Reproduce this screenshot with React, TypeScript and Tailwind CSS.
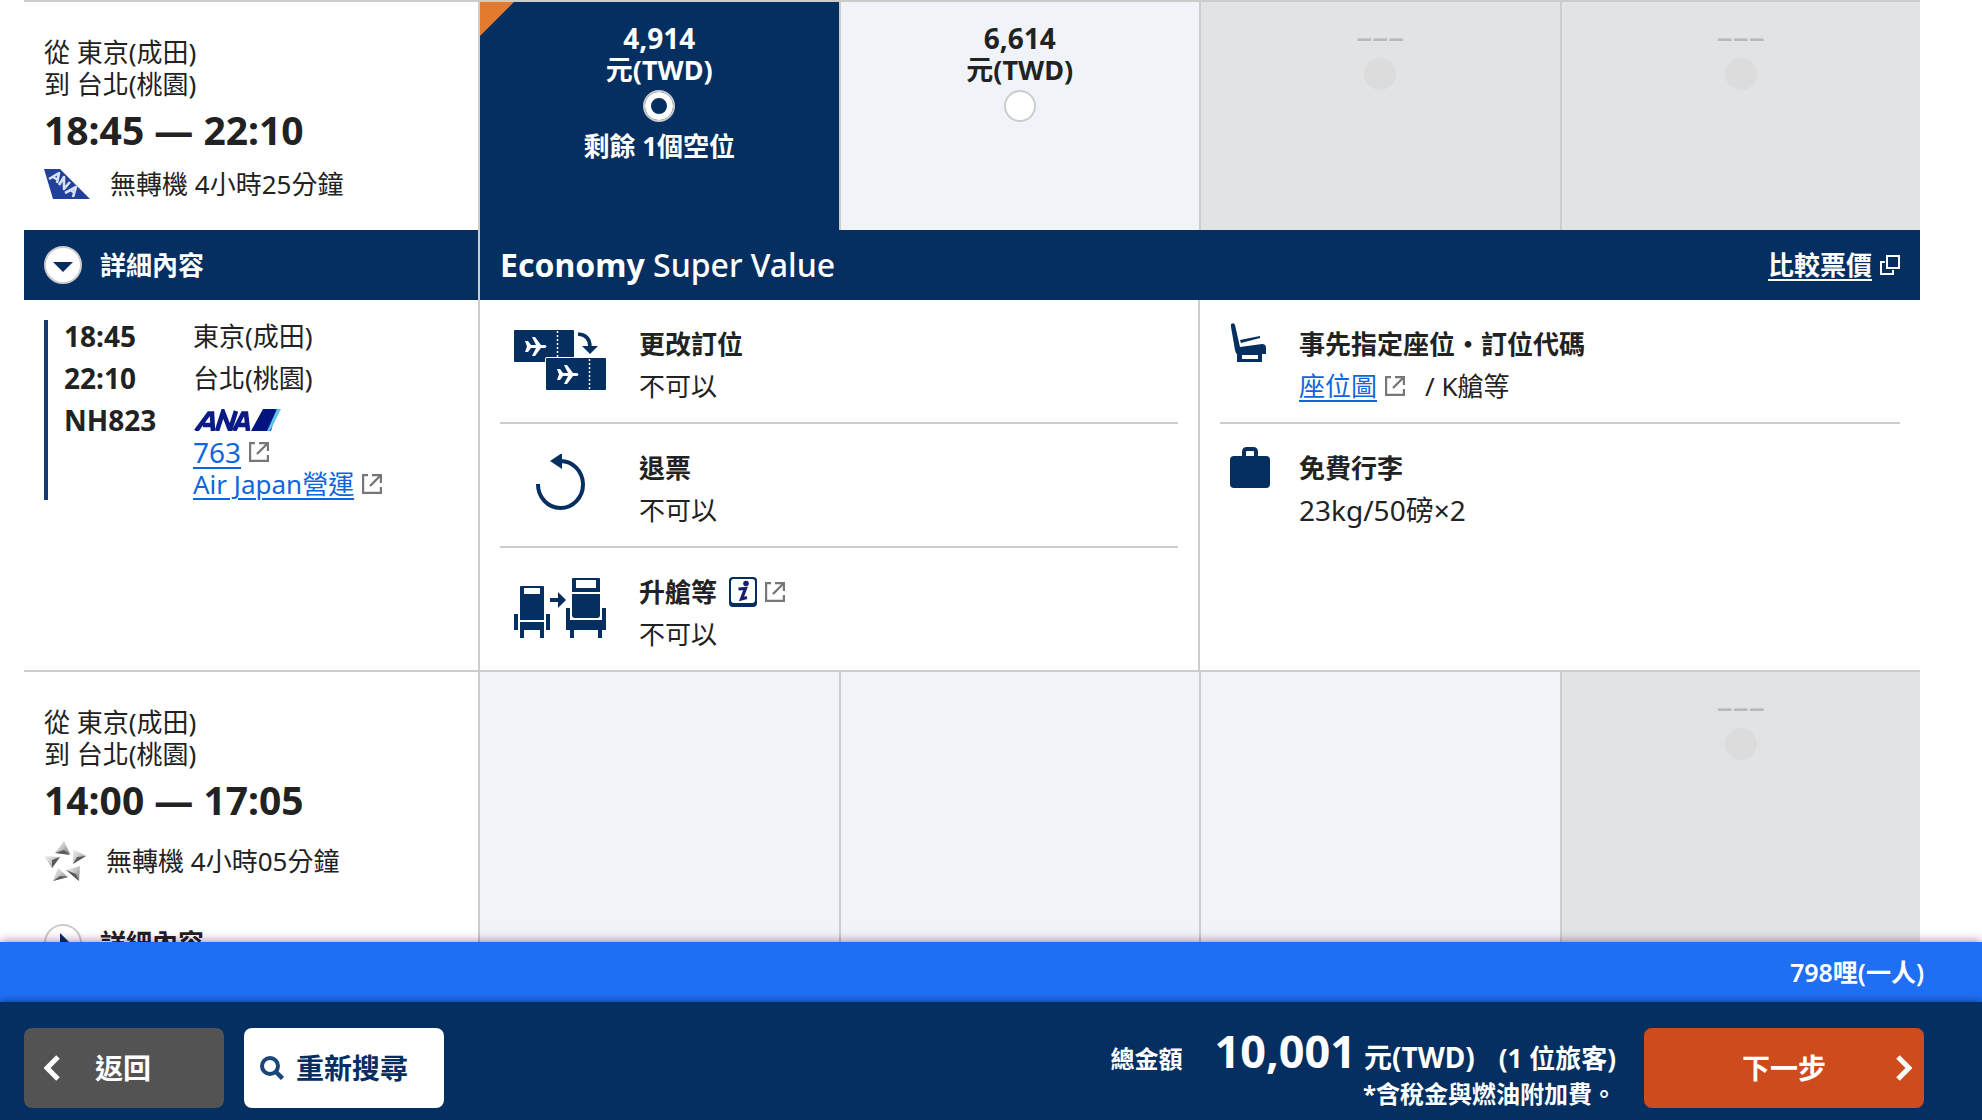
import React from 'react';

interface Fare {
  id: string;
  price?: string;
  note?: string;
  status: 'selected' | 'available' | 'empty' | 'disabled';
}

interface Flight {
  id: string;
  from: string;
  to: string;
  time: string;
  duration: string;
  fares: Fare[];
}

const FLIGHTS: Flight[] = [
  {
    id: 'nh823',
    from: '東京(成田)',
    to: '台北(桃園)',
    time: '18:45 — 22:10',
    duration: '無轉機 4小時25分鐘',
    fares: [
      { id: 'f1', price: '4,914', note: '剩餘 1個空位', status: 'selected' },
      { id: 'f2', price: '6,614', status: 'available' },
      { id: 'f3', status: 'disabled' },
      { id: 'f4', status: 'disabled' },
    ],
  },
  {
    id: 'partner',
    from: '東京(成田)',
    to: '台北(桃園)',
    time: '14:00 — 17:05',
    duration: '無轉機 4小時05分鐘',
    fares: [
      { id: 'f5', status: 'empty' },
      { id: 'f6', status: 'empty' },
      { id: 'f7', status: 'empty' },
      { id: 'f8', status: 'disabled' },
    ],
  },
];

const TailIcon = () => (
  <svg width="46" height="30" viewBox="0 0 46 30" aria-hidden="true">
    <path d="M0 0H16L46 30H9Z" fill="#21409a" />
    <g fill="none" stroke="#d8e0f5" strokeWidth="2.6" strokeLinejoin="round">
      <path d="M5 10L15 4L13 14M9 8L14 11" />
      <path d="M15 16L20 8L20 20L26 13" />
      <path d="M21 24L32 18L29 28M26 21L31 24" />
    </g>
  </svg>
);

const StarIcon = () => (
  <svg width="42" height="40" viewBox="0 0 42 40" aria-hidden="true">
    <defs>
      <linearGradient id="metal" x1="0" y1="0" x2="1" y2="1">
        <stop offset="0" stopColor="#f4f4f4" />
        <stop offset="0.5" stopColor="#c4c4c4" />
        <stop offset="1" stopColor="#777777" />
      </linearGradient>
    </defs>
    <g fill="url(#metal)">
      <path d="M20 0L26 13L11 12Z" />
      <path d="M29 8L42 15L29 23Z" />
      <path d="M36 25L35 40L22 29Z" />
      <path d="M14 27L24 36L9 40Z" />
      <path d="M0 15L16 16L8 27Z" />
    </g>
    <g fill="#5a5a5a">
      <path d="M11 12L20 9L26 14Z" />
      <path d="M42 15L33 16L29 23Z" />
      <path d="M35 40L32 33L22 29Z" />
      <path d="M9 40L16 35L24 36Z" />
      <path d="M8 27L8 19L16 16Z" />
    </g>
  </svg>
);

const AnaLogo = () => (
  <svg width="88" height="22" viewBox="0 0 88 22" role="img" aria-label="ANA">
    <g fill="none" stroke="#0b1a86" strokeWidth="4.6">
      <path d="M3 22L16 4.500H19L20 22M10 16H20" />
      <path d="M24 22L30 3L37 21L43 2" />
      <path d="M41 22L50 4.500H53L55 22M46 16H55" />
    </g>
    <path d="M58 22L70 0H83L77 22Z" fill="#03137f" />
    <path d="M70 22L83 0H84L78 22Z" fill="#03137f" />
    <path d="M74 22L84 0H88L77 22Z" fill="#5cc3ee" />
  </svg>
);

const ExternalIcon = () => (
  <svg width="20" height="20" viewBox="0 0 20 20" fill="none" stroke="#777777" strokeWidth="2.4" aria-hidden="true">
    <path d="M6 1H1V19H19V13" />
    <path d="M8 12L18 2M10 1H19V9" />
  </svg>
);

const WindowIcon = () => (
  <svg width="20" height="20" viewBox="0 0 20 20" fill="none" stroke="#ffffff" strokeWidth="2" aria-hidden="true">
    <path d="M7 1H19V13H7Z" />
    <path d="M5 7H1V19H13V15" />
  </svg>
);

const InfoIcon = () => (
  <svg width="28" height="30" viewBox="0 0 28 30" aria-hidden="true">
    <rect x="0" y="0" width="28" height="30" rx="4" fill="#052f60" />
    <rect x="2" y="2" width="24" height="24" rx="3" fill="#ffffff" />
    <circle cx="17" cy="6.500" r="2.800" fill="#1c1c6c" />
    <path d="M9.500 12L16.500 11.500L12.500 22L18 20.500" fill="none" stroke="#1c1c6c" strokeWidth="3.2" />
  </svg>
);

const PLANE = 'M0 4L3 4L6 8H11L7 0H10L16 8H20Q23 9.500 20 11H16L10 19H7L11 11H6L3 15H0L2 9.500Z';

const ChangeIcon = () => (
  <svg width="92" height="60" viewBox="0 0 92 60" aria-hidden="true">
    <rect x="0" y="0" width="60" height="32" rx="1" fill="#052f60" />
    <rect x="31" y="27" width="61" height="33" rx="2" fill="#ffffff" />
    <rect x="32" y="28" width="60" height="32" rx="1" fill="#052f60" />
    <path d="M43.500 1V27M75.500 29V60" stroke="#ffffff" strokeWidth="1.500" strokeDasharray="2 2" />
    <path d={PLANE} transform="translate(11 7)" fill="#ffffff" />
    <path d={PLANE} transform="translate(43 35)" fill="#ffffff" />
    <path d="M64 4Q76 5 76 17" fill="none" stroke="#052f60" strokeWidth="3.500" />
    <path d="M68 16H84L76 24Z" fill="#052f60" />
  </svg>
);

const RefundIcon = () => (
  <svg width="92" height="60" viewBox="0 0 92 60" aria-hidden="true">
    <path d="M24 30A22.500 23.500 0 1 0 46 7" fill="none" stroke="#052f60" strokeWidth="4" />
    <path d="M36 7L48 -1V15Z" fill="#052f60" />
  </svg>
);

const UpgradeIcon = () => (
  <svg width="92" height="60" viewBox="0 0 92 60" fill="#052f60" aria-hidden="true">
    <path d="M7 8H29Q30 8 30 9V42H6V9Q6 8 7 8ZM10 10V16H26V10Z" fillRule="evenodd" />
    <path d="M6 44H30V60H26V52H10V60H6Z" />
    <path d="M0 36H4V52H0ZM32 36H36V52H32Z" />
    <path d="M36 20H44V14L52 22L44 30V24H36Z" />
    <path d="M59 0H85Q86 0 86 1V14H58V1Q58 0 59 0ZM62 2V10H82V2Z" fillRule="evenodd" />
    <path d="M58 16H86V37Q86 40 83 40H61Q58 40 58 37Z" />
    <path d="M52 30H56V42H88V30H92V52H88V60H84V52H60V60H56V52H52Z" />
  </svg>
);

const SeatIcon = () => (
  <svg width="36" height="40" viewBox="0 0 36 40" fill="#052f60" aria-hidden="true">
    <path d="M1 1Q4 -1 5 2L10 24L32 21Q36 21 36 25V31H32V39H7L7 31Q6 31 5 27L1 4ZM12 32V36H28V32Z" fillRule="evenodd" />
    <path d="M10 17L30 13V15L11 20Z" />
  </svg>
);

const BagIcon = () => (
  <svg width="40" height="41" viewBox="0 0 40 41" aria-hidden="true">
    <rect x="0" y="9" width="40" height="32" rx="4" fill="#052f60" />
    <path d="M14 10V5Q14 2 17 2H23Q26 2 26 5V10" fill="none" stroke="#052f60" strokeWidth="4" />
  </svg>
);

const SearchIcon = () => (
  <svg width="24" height="24" viewBox="0 0 24 24" fill="none" stroke="#1a4578" aria-hidden="true">
    <circle cx="10" cy="10" r="8" strokeWidth="4" />
    <path d="M15.500 15.500L22.500 22.500" strokeWidth="4.500" />
  </svg>
);

const Chevron = ({ direction }: { direction: 'left' | 'right' }) => (
  <svg width="16" height="26" viewBox="0 0 16 26" fill="none" stroke="#ffffff" strokeWidth="5" aria-hidden="true">
    <path d={direction === 'left' ? 'M14 2L3 13L14 24' : 'M2 2L13 13L2 24'} />
  </svg>
);

interface FlightSummaryProps {
  flight: Flight;
  icon: React.ReactNode;
  iconRow: string;
}

const FlightSummary = ({ flight, icon, iconRow }: FlightSummaryProps) => (
  <div className="pt-[34px] pl-5">
    <p>從 {flight.from}</p>
    <p>到 {flight.to}</p>
    <p className="mt-1 text-[39px] leading-[52px] font-bold">{flight.time}</p>
    <div className={`mt-2 flex items-center gap-5 ${iconRow}`}>
      {icon}
      <span>{flight.duration}</span>
    </div>
  </div>
);

const FareCell = ({ fare }: { fare: Fare }) => {
  if (fare.status === 'disabled') {
    return (
      <td className="border-l-2 border-[#cccccc] bg-[#e2e3e5] pt-5 text-center align-top">
        <p className="mb-[6px] text-[32px] leading-[30px] text-[#b8b8b8]">–––</p>
        <input
          type="radio"
          disabled
          aria-label="無空位"
          className="mx-auto block size-8 appearance-none rounded-full bg-[#dcdcdc]"
        />
      </td>
    );
  }
  if (fare.status === 'empty') {
    return <td className="border-l-2 border-[#cccccc] bg-[#f0f4f9]"></td>;
  }
  const selected = fare.status === 'selected';
  return (
    <td
      className={`relative border-l-2 border-[#cccccc] pt-5 text-center align-top ${
        selected ? 'bg-[#052f60] text-white' : 'bg-[#f0f4f9]'
      }`}
    >
      {selected && (
        <svg className="absolute top-0 left-0" width="34" height="34" viewBox="0 0 34 34" aria-hidden="true">
          <path d="M0 0H34L0 34Z" fill="#e37a2d" />
        </svg>
      )}
      <label className="block text-[28px] leading-8 font-bold">
        <span className="block">{fare.price}</span>
        <span className="block text-[27px]">元(TWD)</span>
        <input
          type="radio"
          name="fare"
          defaultChecked={selected}
          className="mx-auto mt-1 block size-8 appearance-none rounded-full border-2 border-[#cccccc] bg-white checked:bg-[#052f60] checked:shadow-[inset_0_0_0_6px_white]"
        />
      </label>
      {fare.note && <p className="mt-2 font-bold">{fare.note}</p>}
    </td>
  );
};

interface FeatureProps {
  icon: React.ReactNode;
  title: React.ReactNode;
  narrow?: boolean;
  last?: boolean;
  children: React.ReactNode;
}

const Feature = ({ icon, title, narrow, last, children }: FeatureProps) => (
  <li className={`flex h-[124px] pt-[23px] leading-[42px] ${last ? '' : 'border-b-2 border-[#cccccc]'}`}>
    <div className={narrow ? 'w-[79px] pl-[10px]' : 'w-[139px] pt-[7px] pl-[14px]'}>{icon}</div>
    <div>
      <h3 className="flex items-center gap-2 font-bold">{title}</h3>
      <div className="flex items-center">{children}</div>
    </div>
  </li>
);

const LINK = 'text-[#0d66dd] underline decoration-2 underline-offset-4';

const FlightDetails = () => (
  <div className="mt-5 ml-5 flex h-[180px] border-l-4 border-[#143c6e] pl-4">
    <div className="w-[129px] text-[28px] font-bold">
      <p>18:45</p>
      <p className="mt-[10px]">22:10</p>
      <p className="mt-[10px]">NH823</p>
    </div>
    <div>
      <p>東京(成田)</p>
      <p className="mt-[10px]">台北(桃園)</p>
      <div className="mt-[10px] flex h-8 items-center">
        <AnaLogo />
      </div>
      <p className="flex items-center gap-2">
        <a href="#aircraft" className={`text-[28px] ${LINK}`}>763</a>
        <ExternalIcon />
      </p>
      <p className="flex items-center gap-2">
        <a href="#operator" className={LINK}>Air Japan營運</a>
        <ExternalIcon />
      </p>
    </div>
  </div>
);

const FareTable = () => (
  <table className="w-full table-fixed border-separate border-spacing-0 border-t-2 border-[#cccccc] text-left">
    <colgroup>
      <col className="w-[454px]" />
      <col />
      <col />
      <col />
      <col />
    </colgroup>
    <tbody>
      <tr className="h-[228px]">
        <th scope="row" className="align-top font-normal">
          <FlightSummary flight={FLIGHTS[0]} icon={<TailIcon />} iconRow="h-10" />
        </th>
        {FLIGHTS[0].fares.map((fare) => (
          <FareCell key={fare.id} fare={fare} />
        ))}
      </tr>
      <tr className="h-[70px] bg-[#052f60] text-white">
        <td className="pl-5">
          <button type="button" className="flex items-center gap-[18px] font-bold">
            <svg width="38" height="38" viewBox="0 0 38 38" aria-hidden="true">
              <circle cx="19" cy="19" r="18" fill="#ffffff" stroke="#cccccc" strokeWidth="2" />
              <path d="M9 16H29L19 26Z" fill="#052f60" />
            </svg>
            詳細內容
          </button>
        </td>
        <td colSpan={4} className="border-l-2 border-[#cccccc] px-5">
          <div className="flex items-center justify-between">
            <h2 className="text-[32px] font-medium">
              <strong>Economy</strong> Super Value
            </h2>
            <a href="#compare" className="flex items-center gap-2 font-bold">
              <span className="underline underline-offset-4">比較票價</span>
              <WindowIcon />
            </a>
          </div>
        </td>
      </tr>
      <tr>
        <td className="h-[372px] border-b-2 border-[#cccccc] align-top">
          <FlightDetails />
        </td>
        <td colSpan={4} className="border-b-2 border-l-2 border-[#cccccc] p-0 align-top">
          <div className="grid grid-cols-2">
            <ul className="h-[370px] border-r-2 border-[#cccccc] px-5">
              <Feature icon={<ChangeIcon />} title="更改訂位">
                不可以
              </Feature>
              <Feature icon={<RefundIcon />} title="退票">
                不可以
              </Feature>
              <Feature
                icon={<UpgradeIcon />}
                title={
                  <>
                    升艙等
                    <span className="flex items-center gap-2 pl-1">
                      <InfoIcon />
                      <ExternalIcon />
                    </span>
                  </>
                }
                last
              >
                不可以
              </Feature>
            </ul>
            <ul className="px-5">
              <Feature icon={<SeatIcon />} title="事先指定座位・訂位代碼" narrow>
                <a href="#seatmap" className={`mr-2 ${LINK}`}>座位圖</a>
                <ExternalIcon />
                <span className="pl-5">/ K艙等</span>
              </Feature>
              <Feature icon={<BagIcon />} title="免費行李" narrow last>
                <span className="text-[28px]">23kg/50磅×2</span>
              </Feature>
            </ul>
          </div>
        </td>
      </tr>
      <tr>
        <th scope="row" className="h-[400px] align-top font-normal">
          <FlightSummary flight={FLIGHTS[1]} icon={<StarIcon />} iconRow="h-[54px]" />
          <button type="button" className="mt-9 ml-5 flex items-center gap-[18px] font-bold">
            <svg width="38" height="38" viewBox="0 0 38 38" aria-hidden="true">
              <circle cx="19" cy="19" r="18" fill="#ffffff" stroke="#cccccc" strokeWidth="2" />
              <path d="M16 9V29L26 19Z" fill="#052f60" />
            </svg>
            詳細內容
          </button>
        </th>
        {FLIGHTS[1].fares.map((fare) => (
          <FareCell key={fare.id} fare={fare} />
        ))}
      </tr>
    </tbody>
  </table>
);

const BookingBar = () => (
  <footer className="relative shrink-0 text-white shadow-[0_0_10px_rgba(0,0,0,0.5)]">
    <div className="flex h-[60px] items-center justify-end bg-[#1e6ff3] pr-[58px] text-[25px] font-semibold">
      798哩(一人)
    </div>
    <div className="relative flex h-[118px] items-start gap-5 bg-[#052f60] pt-[26px] pr-[58px] pl-6 font-bold shadow-[0_0_8px_rgba(0,0,0,0.5)]">
      <button type="button" className="flex h-20 w-[200px] items-center rounded-lg bg-[#535353] pl-5 text-[28px]">
        <Chevron direction="left" />
        <span className="pl-[35px]">返回</span>
      </button>
      <button
        type="button"
        className="flex h-20 w-[200px] items-center gap-3 rounded-lg bg-white pl-4 text-[28px] text-[#052f60]"
      >
        <SearchIcon />
        重新搜尋
      </button>
      <div className="ml-auto pr-2 text-right text-2xl">
        <p className="flex h-[50px] items-baseline">
          <span>總金額</span>
          <span className="pl-8 text-[45px] leading-[46px]">10,001</span>
          <span className="pl-2 text-[28px]">元(TWD)</span>
          <span className="pl-6 text-[26px]">(1 位旅客)</span>
        </p>
        <p className="leading-8">*含稅金與燃油附加費。</p>
      </div>
      <button type="button" className="flex h-20 w-[280px] items-center rounded-lg bg-[#cd4b1c] pr-3 pl-7 text-[28px]">
        <span className="flex-1">下一步</span>
        <Chevron direction="right" />
      </button>
    </div>
  </footer>
);

const App = () => (
  <div className="flex h-screen flex-col bg-white font-['Noto_Sans','Noto_Sans_CJK_TC',sans-serif] text-[26px] leading-8 text-[#222222]">
    <main className="min-h-0 flex-1 overflow-hidden pr-[62px] pl-6">
      <FareTable />
    </main>
    <BookingBar />
  </div>
);

export default App;
